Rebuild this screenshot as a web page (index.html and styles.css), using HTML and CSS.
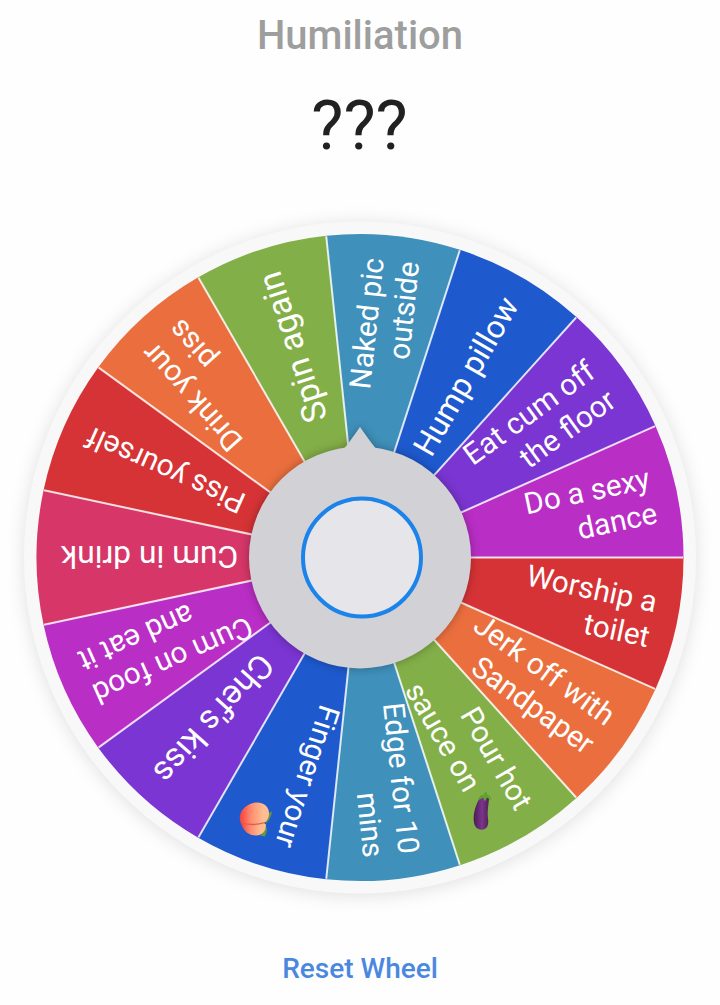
FILE: index.html
```html
<!DOCTYPE html>
<html lang="en">
<head>
<meta charset="utf-8">
<title>Wheel</title>
<link rel="stylesheet" href="styles.css">
</head>
<body>
<main class="page">
  <h1 class="title">Humiliation</h1>
  <p class="result">???</p>
  <svg class="wheel" viewBox="-360 -360.5 720 720">
    <defs>
      <path id="slice" d="M0 0H323.5A323.5 323.5 0 0 1 295.53 131.58Z"/>
      <linearGradient id="peach"><stop offset="0" stop-color="#f5403a"/><stop offset=".4" stop-color="#ff8f72"/><stop offset=".8" stop-color="#ffbd91"/></linearGradient>
      <linearGradient id="eggplant" x1="0" x2="1"><stop offset="0" stop-color="#4a1c55"/><stop offset=".55" stop-color="#7b3589"/><stop offset="1" stop-color="#4f2158"/></linearGradient>
    </defs>
    <circle class="rim" r="336"/>
    <g class="slices">
      <use href="#slice" class="red"/>
      <use href="#slice" class="orange" transform="rotate(24)"/>
      <use href="#slice" class="green" transform="rotate(48)"/>
      <use href="#slice" class="teal" transform="rotate(72)"/>
      <use href="#slice" class="blue" transform="rotate(96)"/>
      <use href="#slice" class="violet" transform="rotate(120)"/>
      <use href="#slice" class="magenta" transform="rotate(144)"/>
      <use href="#slice" class="pink" transform="rotate(168)"/>
      <use href="#slice" class="red" transform="rotate(192)"/>
      <use href="#slice" class="orange" transform="rotate(216)"/>
      <use href="#slice" class="green" transform="rotate(240)"/>
      <use href="#slice" class="teal" transform="rotate(264)"/>
      <use href="#slice" class="blue" transform="rotate(288)"/>
      <use href="#slice" class="violet" transform="rotate(312)"/>
      <use href="#slice" class="magenta" transform="rotate(336)"/>
    </g>
    <g class="dividers">
      <path d="M0 0H323"/>
      <path d="M0 0H323" transform="rotate(24)"/>
      <path d="M0 0H323" transform="rotate(48)"/>
      <path d="M0 0H323" transform="rotate(72)"/>
      <path d="M0 0H323" transform="rotate(96)"/>
      <path d="M0 0H323" transform="rotate(120)"/>
      <path d="M0 0H323" transform="rotate(144)"/>
      <path d="M0 0H323" transform="rotate(168)"/>
      <path d="M0 0H323" transform="rotate(192)"/>
      <path d="M0 0H323" transform="rotate(216)"/>
      <path d="M0 0H323" transform="rotate(240)"/>
      <path d="M0 0H323" transform="rotate(264)"/>
      <path d="M0 0H323" transform="rotate(288)"/>
      <path d="M0 0H323" transform="rotate(312)"/>
      <path d="M0 0H323" transform="rotate(336)"/>
    </g>
    <g class="labels">
      <text transform="rotate(12)"><tspan x="299.5" y="-7.5">Worship a</tspan><tspan x="299.5" y="28">toilet</tspan></text>
      <text transform="rotate(36)"><tspan x="298" y="-7.5">Jerk off with</tspan><tspan x="298" y="28">Sandpaper</tspan></text>
      <text transform="rotate(60)"><tspan x="298.5" y="-7.5">Pour hot</tspan><tspan x="257" y="28">sauce on</tspan></text>
      <text transform="rotate(84)"><tspan x="299.5" y="-7.5">Edge for 10</tspan><tspan x="299.5" y="28">mins</tspan></text>
      <text transform="rotate(108)"><tspan x="298.5" y="-7.5">Finger your</tspan></text>
      <text transform="rotate(132)" class="large"><tspan x="298" y="12.5">Chef's kiss</tspan></text>
      <text transform="rotate(156)"><tspan x="298.5" y="-7.5">Cum on food</tspan><tspan x="298.5" y="28">and eat it</tspan></text>
      <text transform="rotate(180)" class="medium"><tspan x="299" y="12">Cum in drink</tspan></text>
      <text transform="rotate(204)"><tspan x="298.5" y="11">Piss yourself</tspan></text>
      <text transform="rotate(228)"><tspan x="298" y="-7.5">Drink your</tspan><tspan x="298" y="28">piss</tspan></text>
      <text transform="rotate(252)" class="large"><tspan x="299" y="12.5">Spin again</tspan></text>
      <text transform="rotate(276)"><tspan x="299.5" y="-7.5">Naked pic</tspan><tspan x="299.5" y="28">outside</tspan></text>
      <text transform="rotate(300)" class="medium"><tspan x="298.5" y="12">Hump pillow</tspan></text>
      <text transform="rotate(324)"><tspan x="298.5" y="-7.5">Eat cum off</tspan><tspan x="298.5" y="28">the floor</tspan></text>
      <text transform="rotate(348)"><tspan x="299.5" y="-7.5">Do a sexy</tspan><tspan x="299.5" y="28">dance</tspan></text>
    </g>
    <g transform="translate(-103 262)">
      <path fill="#629b38" d="M8 0Q10-7 15-8Q14-1 9 4ZM3 16Q7 14 7 9L10 8Q10 13 8 17Z"/>
      <path fill="url(#peach)" d="M-16 4C-13 13-7 16-1 16C5 16 9 12 9 5L0-2L-16 1Z"/>
      <path fill="url(#peach)" d="M-16 4C-21-7-10-17 0-17C8-17 12-12 12-6C12 1 7 5 1 5C-6 6-11 5-16 4Z"/>
      <path fill="none" stroke="#dd5e48" stroke-width="1.3" d="M-16 3Q-5 7 8 3"/>
    </g>
    <g transform="translate(123 254)">
      <path fill="url(#eggplant)" d="M-3-15C-5-10-8-5-9 2C-10 10-9 17-3 18C4 19 6 14 5 7C4-1 6-9 6-14Q1-18-3-15Z"/>
      <path fill="#5fa32f" d="M-5-11Q-3-17 1-17L2-20L4-19L4-17Q8-16 8-11L4-14L2-10L0-14Z"/>
    </g>
    <g class="hub">
      <circle r="111"/>
      <path d="M-16-109Q-13-112 0-130.5Q13-112 16-109Z"/>
    </g>
    <circle class="spin" cx="2" r="59"/>
  </svg>
  <a class="reset">Reset Wheel</a>
</main>
</body>
</html>
```
FILE: styles.css
```css
body {
  margin: 0;
  background: #fefefe;
  font-family: Roboto, sans-serif;
}
.page {
  display: flex;
  flex-direction: column;
  align-items: center;
  height: 1005px;
  overflow: hidden;
}
.title {
  margin: 12px 0 0;
  font-size: 40px;
  line-height: 48px;
  font-weight: 500;
  color: #9e9e9e;
}
.result {
  margin: 26px 0 0;
  padding-right: 1px;
  font-size: 68px;
  line-height: 80px;
  color: #212121;
}
.wheel {
  width: 720px;
  height: 720px;
  margin-top: 31px;
  flex: none;
  overflow: visible;
}
.rim {
  fill: #f8f8f8;
  filter: drop-shadow(0 2px 9px rgba(0, 0, 0, .12));
}
.red { fill: #d63336; }
.orange { fill: #eb6f3e; }
.green { fill: #83af48; }
.teal { fill: #3f90bb; }
.blue { fill: #1e59ce; }
.violet { fill: #7b35d2; }
.magenta { fill: #b92ec5; }
.pink { fill: #d63768; }
.dividers {
  stroke: #fff;
  stroke-opacity: .82;
  stroke-width: 2;
}
.labels {
  fill: #fff;
  font-size: 29.8px;
  text-anchor: end;
}
.medium { font-size: 31.8px; }
.large { font-size: 33.7px; }
.hub {
  fill: #d1d1d6;
  filter: drop-shadow(0 0 5px rgba(0, 0, 0, .3));
}
.spin {
  fill: #e5e5ea;
  stroke: #1b83ea;
  stroke-width: 4;
}
.reset {
  margin-top: 36px;
  font-size: 28px;
  line-height: 32px;
  font-weight: 500;
  color: #4a88e0;
}
```
